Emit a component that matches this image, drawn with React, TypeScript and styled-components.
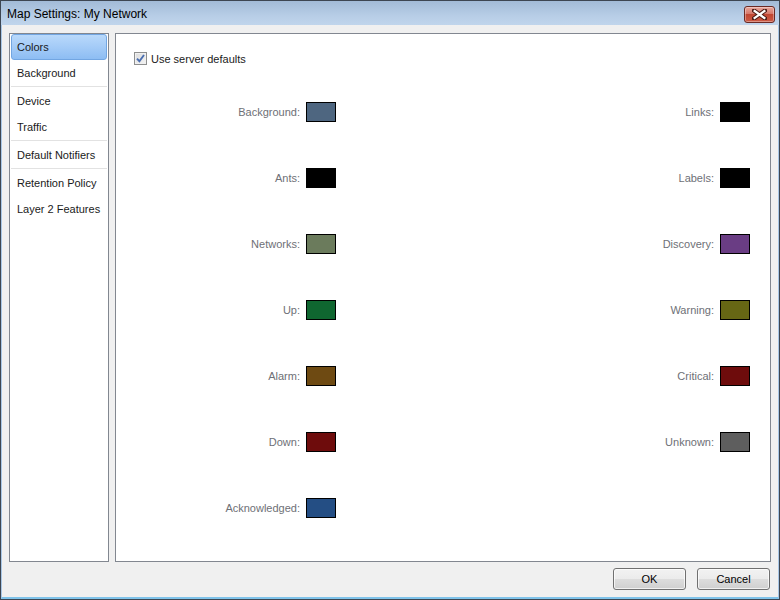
import React from "react"
import styled, { createGlobalStyle } from "styled-components"

const GlobalStyle = createGlobalStyle`
  html, body {
    margin: 0;
    padding: 0;
    background: #f0f0f0;
  }
  body {
    font-family: "Liberation Sans", Arial, sans-serif;
    font-size: 11px;
  }
`

type Swatch = { label: string; color: string }

const leftColors: Swatch[] = [
  { label: "Background:", color: "#4e6680" },
  { label: "Ants:", color: "#000000" },
  { label: "Networks:", color: "#6b7b5c" },
  { label: "Up:", color: "#0f6630" },
  { label: "Alarm:", color: "#6e4a12" },
  { label: "Down:", color: "#6e0c0c" },
  { label: "Acknowledged:", color: "#244e84" },
]

const rightColors: Swatch[] = [
  { label: "Links:", color: "#000000" },
  { label: "Labels:", color: "#000000" },
  { label: "Discovery:", color: "#6a3d84" },
  { label: "Warning:", color: "#666614" },
  { label: "Critical:", color: "#6e0c0c" },
  { label: "Unknown:", color: "#5e5e5e" },
]

const menuGroups = [
  ["Colors", "Background"],
  ["Device", "Traffic"],
  ["Default Notifiers"],
  ["Retention Policy", "Layer 2 Features"],
]

const App = () => {
  const rows = leftColors.map((l, i) => ({ left: l, right: rightColors[i] }))

  return (
    <>
      <GlobalStyle />
      <Window>
        <TitleBar>
          <Title>Map Settings: My Network</Title>
          <CloseButton>
            <svg width="15" height="11" viewBox="0 0 15 11">
              <path
                d="M2 1.5 L13 9.5 M13 1.5 L2 9.5"
                stroke="#4a1a14"
                strokeWidth="4.2"
                strokeLinecap="square"
              />
              <path
                d="M2.6 2 L12.4 9 M12.4 2 L2.6 9"
                stroke="#ffffff"
                strokeWidth="2.2"
                strokeLinecap="square"
              />
            </svg>
          </CloseButton>
        </TitleBar>
        <Body>
          <Panels>
            <SideList>
              {menuGroups.map((group, gi) => (
                <MenuGroup key={gi} $last={gi === menuGroups.length - 1}>
                  {group.map(item => (
                    <MenuItem key={item} $selected={item === "Colors"}>
                      {item}
                    </MenuItem>
                  ))}
                </MenuGroup>
              ))}
            </SideList>
            <ContentPanel>
              <CheckRow>
                <CheckBox>
                  <svg width="9" height="9" viewBox="0 0 9 9">
                    <path
                      d="M1 4.6 L3.4 7.2 L8 1"
                      fill="none"
                      stroke="#4a6eb0"
                      strokeWidth="1.9"
                    />
                  </svg>
                </CheckBox>
                Use server defaults
              </CheckRow>
              <ColorGrid>
                {rows.map((r, i) => (
                  <React.Fragment key={i}>
                    <ColorCell>
                      <ColorLabel>{r.left.label}</ColorLabel>
                      <ColorBox style={{ background: r.left.color }} />
                    </ColorCell>
                    <ColorCell>
                      {r.right && (
                        <>
                          <ColorLabel>{r.right.label}</ColorLabel>
                          <ColorBox style={{ background: r.right.color }} />
                        </>
                      )}
                    </ColorCell>
                  </React.Fragment>
                ))}
              </ColorGrid>
            </ContentPanel>
          </Panels>
          <Footer>
            <DialogButton>OK</DialogButton>
            <DialogButton>Cancel</DialogButton>
          </Footer>
        </Body>
      </Window>
    </>
  )
}

export default App

const Window = styled.div`
  width: 780px;
  height: 600px;
  box-sizing: border-box;
  border: 1px solid #3d4652;
  display: flex;
  flex-direction: column;
  background: #f0f0f0;
  overflow: hidden;
`

const TitleBar = styled.div`
  height: 24px;
  flex: none;
  display: flex;
  align-items: center;
  justify-content: space-between;
  padding: 0 4px 0 6px;
  background: linear-gradient(#a2bbd7, #b7cde6 60%, #c0d5ec);
`

const Title = styled.span`
  font-size: 12px;
  color: #000;
  margin-top: 2px;
`

const CloseButton = styled.div`
  width: 29px;
  height: 15px;
  margin-top: 2px;
  border: 1px solid #6b2a24;
  border-radius: 3px;
  background: linear-gradient(#e8a79c, #d6786a 45%, #c04632 50%, #cc5a44);
  display: flex;
  align-items: center;
  justify-content: center;
  box-shadow: inset 0 0 0 1px rgba(255, 255, 255, 0.35);
`

const Body = styled.div`
  flex: 1;
  display: flex;
  flex-direction: column;
  padding: 8px 7px 0 7px;
  border-left: 1px solid #a9c7e6;
  border-right: 1px solid #a9c7e6;
  border-bottom: 2px solid #7fc3ea;
`

const Panels = styled.div`
  display: flex;
  gap: 6px;
  height: 529px;
`

const SideList = styled.div`
  width: 100px;
  box-sizing: border-box;
  border: 1px solid #828790;
  background: #fff;
  padding: 0 1px;
`

const MenuGroup = styled.div<{ $last?: boolean }>`
  border-bottom: ${p => (p.$last ? "none" : "1px solid #e2e2e2")};
  margin-bottom: ${p => (p.$last ? "0" : "1px")};
`

const MenuItem = styled.div<{ $selected?: boolean }>`
  height: 26px;
  box-sizing: border-box;
  display: flex;
  align-items: center;
  padding-left: 5px;
  color: #1a1a1a;
  white-space: nowrap;
  border-radius: 3px;
  border: 1px solid ${p => (p.$selected ? "#72a6e2" : "transparent")};
  background: ${p =>
    p.$selected ? "linear-gradient(#b9d9fb, #a4cbf7 50%, #8dbdf3)" : "transparent"};
`

const ContentPanel = styled.div`
  flex: 1;
  box-sizing: border-box;
  border: 1px solid #828790;
  background: #fff;
  padding: 18px 0 0 18px;
`

const CheckRow = styled.label`
  display: flex;
  align-items: center;
  gap: 4px;
  height: 13px;
  color: #1a1a1a;
`

const CheckBox = styled.span`
  width: 13px;
  height: 13px;
  box-sizing: border-box;
  border: 1px solid #8e8f8f;
  background: linear-gradient(135deg, #dcdcdc, #f4f4f4);
  box-shadow: inset 0 0 0 1px #f0f0f0;
  display: flex;
  align-items: center;
  justify-content: center;
`

const ColorGrid = styled.div`
  display: grid;
  grid-template-columns: 202px 1fr;
  grid-auto-rows: 20px;
  row-gap: 46px;
  margin-top: 37px;
  padding-right: 20px;
`

const ColorCell = styled.div`
  display: flex;
  align-items: center;
  justify-content: flex-end;
  gap: 6px;
`

const ColorLabel = styled.span`
  color: #6e7076;
`

const ColorBox = styled.span`
  width: 30px;
  height: 20px;
  box-sizing: border-box;
  border: 1px solid #000;
`

const Footer = styled.div`
  display: flex;
  justify-content: flex-end;
  gap: 11px;
  padding: 6px 1px 0 0;
`

const DialogButton = styled.button`
  width: 73px;
  height: 22px;
  font-family: "Liberation Sans", Arial, sans-serif;
  font-size: 11px;
  color: #000;
  border: 1px solid #707070;
  border-radius: 3px;
  background: linear-gradient(#f2f2f2, #ebebeb 50%, #dddddd 50%, #cfcfcf);
  box-shadow: inset 0 0 0 1px rgba(255, 255, 255, 0.7);
  padding: 0;
`
